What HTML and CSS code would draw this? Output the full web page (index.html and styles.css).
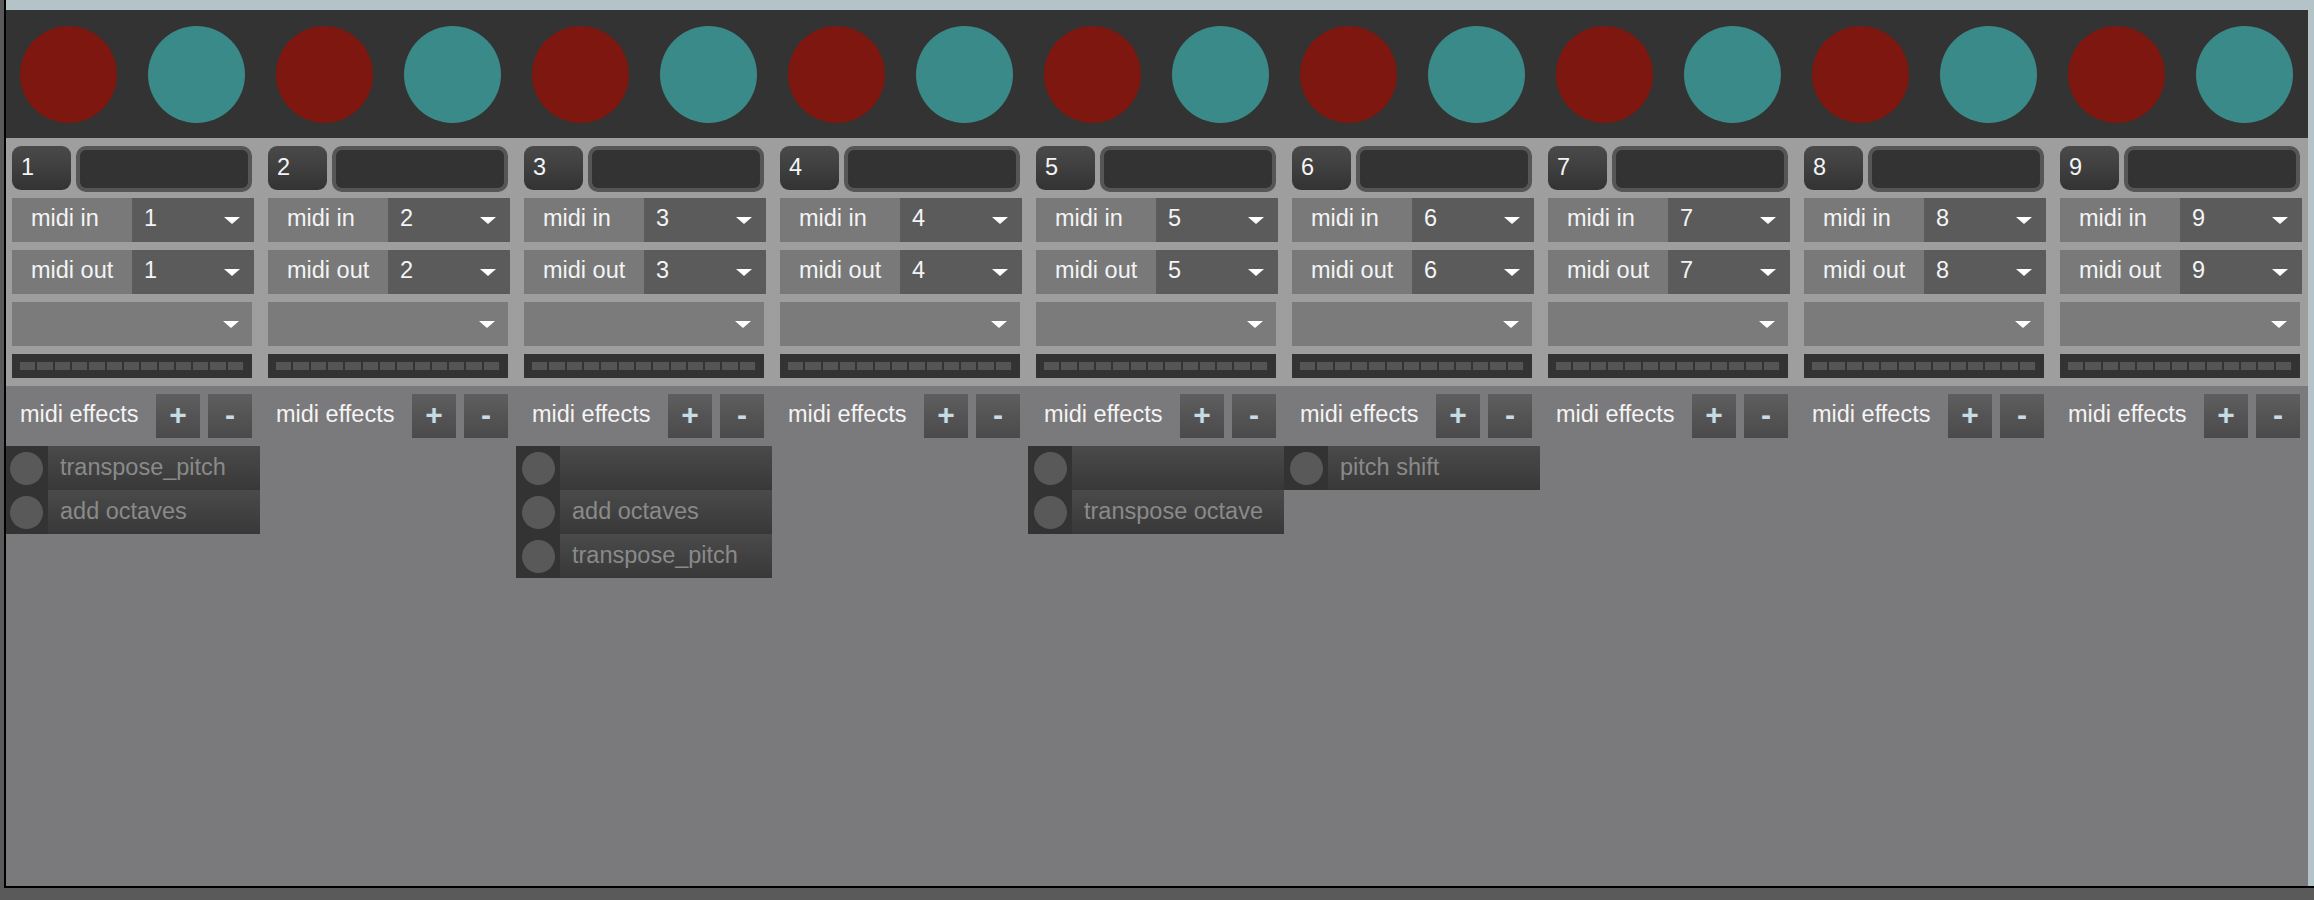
FILE: index.html
```html
<!DOCTYPE html>
<html>
<head>
<meta charset="utf-8">
<link rel="stylesheet" href="styles.css">
</head>
<body>
<div class="window">
  <div class="panel">
    <div class="inner">
      <div class="pads">
        <div class="pad"><span class="dot red"></span></div><div class="pad"><span class="dot teal"></span></div>
        <div class="pad"><span class="dot red"></span></div><div class="pad"><span class="dot teal"></span></div>
        <div class="pad"><span class="dot red"></span></div><div class="pad"><span class="dot teal"></span></div>
        <div class="pad"><span class="dot red"></span></div><div class="pad"><span class="dot teal"></span></div>
        <div class="pad"><span class="dot red"></span></div><div class="pad"><span class="dot teal"></span></div>
        <div class="pad"><span class="dot red"></span></div><div class="pad"><span class="dot teal"></span></div>
        <div class="pad"><span class="dot red"></span></div><div class="pad"><span class="dot teal"></span></div>
        <div class="pad"><span class="dot red"></span></div><div class="pad"><span class="dot teal"></span></div>
        <div class="pad"><span class="dot red"></span></div><div class="pad"><span class="dot teal"></span></div>
      </div>
      <div class="channels" id="channels"></div>
    </div>
  </div>
</div>
<script src="app.js"></script>
</body>
</html>
```
FILE: styles.css
```css
* { box-sizing: border-box; }
html, body { margin: 0; padding: 0; }
body {
  background: #5a5a5a;
  width: 2314px;
  height: 900px;
  overflow: hidden;
  font-family: "Liberation Sans", Arial, sans-serif;
  font-size: 23.5px;
}
.window {
  margin-left: 4px;
  width: 2310px;
  height: 888px;
  border-left: 2px solid #000;
  border-bottom: 2px solid #000;
  background: #b3c3c7;
  padding-top: 10px;
}
.panel {
  width: 2302px;
  height: 876px;
  background: #7a797b;
  overflow: hidden;
}
.inner {
  margin-left: -2px;
  width: 2304px;
}
.pads {
  display: flex;
  height: 128px;
  background: #333333;
}
.pad {
  width: 128px;
  display: flex;
  align-items: center;
  justify-content: center;
}
.dot {
  display: block;
  width: 97px;
  height: 97px;
  border-radius: 50%;
}
.dot.red { background: #7d170f; }
.dot.teal { background: #3b8a8a; }

.channels { display: flex; }
.channel {
  width: 256px;
  display: flex;
  flex-direction: column;
}
.strip {
  background: #9e9e9e;
  padding: 8px 6px 8px 8px;
  display: flex;
  flex-direction: column;
}
.head {
  display: flex;
  height: 46px;
  gap: 5px;
}
.num {
  width: 59px;
  height: 44px;
  border-radius: 9px;
  background: linear-gradient(#4a4a4a, #333333);
  color: #f4f4f4;
  line-height: 42px;
  padding-left: 9px;
}
.name {
  width: 176px;
  height: 46px;
  border-radius: 10px;
  background: #333333;
  border: 4px solid #565656;
}
.sel-row {
  display: flex;
  height: 44px;
  margin-top: 6px;
  color: #f4f4f4;
}
.sel-row + .sel-row { margin-top: 8px; }
.label {
  width: 120px;
  background: #797979;
  line-height: 41px;
  padding-left: 19px;
  white-space: nowrap;
}
.val {
  flex: 1;
  background: #5b5b5b;
  display: flex;
  align-items: center;
  justify-content: space-between;
  padding: 0 14px 0 12px;
  line-height: 41px;
}
.val span { padding-bottom: 3px; }
.arrow {
  width: 0;
  height: 0;
  border-left: 8.5px solid transparent;
  border-right: 8.5px solid transparent;
  border-top: 7px solid #ffffff;
}
.drop {
  margin-top: 8px;
  width: 240px;
  height: 44px;
  background: #7b7b7b;
  display: flex;
  align-items: center;
  justify-content: flex-end;
  padding-right: 13px;
}
.meter {
  margin-top: 8px;
  width: 240px;
  height: 24px;
  background: #333333;
  display: flex;
  align-items: center;
  gap: 2px;
  padding: 0 9px 0 8px;
}
.seg {
  flex: 1;
  height: 8px;
  background: #555555;
}
.fx-head {
  display: flex;
  align-items: center;
  padding: 8px 8px 0 8px;
  height: 52px;
  color: #f4f4f4;
}
.fx-label {
  flex: 1;
  line-height: 41px;
  padding-left: 8px;
  padding-bottom: 3px;
  white-space: nowrap;
}
.btn {
  width: 44px;
  height: 44px;
  margin-left: 8px;
  background: linear-gradient(#5e5e5e, #4a4a4a);
  color: #c7dce2;
  display: flex;
  align-items: center;
  justify-content: center;
  font-weight: bold;
}
.btn.plus { font-size: 30px; padding-bottom: 2px; }
.btn.minus { font-size: 30px; padding-bottom: 2px; }
.fx-list {
  margin-top: 8px;
  display: flex;
  flex-direction: column;
}
.fx {
  display: flex;
  height: 44px;
}
.tog {
  width: 44px;
  height: 44px;
  background: #333333;
  display: flex;
  align-items: center;
  justify-content: center;
}
.tog span {
  width: 33px;
  height: 33px;
  border-radius: 50%;
  background: #595959;
}
.fx-name {
  flex: 1;
  background: linear-gradient(#4a4a4a, #383838);
  color: #8a8a8a;
  line-height: 42px;
  padding-left: 12px;
  white-space: nowrap;
}
```
FILE: app.js
```js
var lists = {
  1: ["transpose_pitch", "add octaves"],
  3: ["", "add octaves", "transpose_pitch"],
  5: ["", "transpose octave"],
  6: ["pitch shift"]
};
var html = "";
for (var i = 1; i <= 9; i++) {
  var segs = "";
  for (var s = 0; s < 13; s++) segs += '<span class="seg"></span>';
  var fx = "";
  (lists[i] || []).forEach(function (n) {
    fx += '<div class="fx"><div class="tog"><span></span></div><div class="fx-name">' + n + '</div></div>';
  });
  html += '<div class="channel">' +
    '<div class="strip">' +
      '<div class="head"><div class="num">' + i + '</div><div class="name"></div></div>' +
      '<div class="sel-row"><div class="label">midi in</div><div class="val"><span>' + i + '</span><i class="arrow"></i></div></div>' +
      '<div class="sel-row"><div class="label">midi out</div><div class="val"><span>' + i + '</span><i class="arrow"></i></div></div>' +
      '<div class="drop"><i class="arrow"></i></div>' +
      '<div class="meter">' + segs + '</div>' +
    '</div>' +
    '<div class="fx-head"><div class="fx-label">midi effects</div><div class="btn plus">+</div><div class="btn minus">-</div></div>' +
    '<div class="fx-list">' + fx + '</div>' +
  '</div>';
}
document.getElementById("channels").innerHTML = html;
```
